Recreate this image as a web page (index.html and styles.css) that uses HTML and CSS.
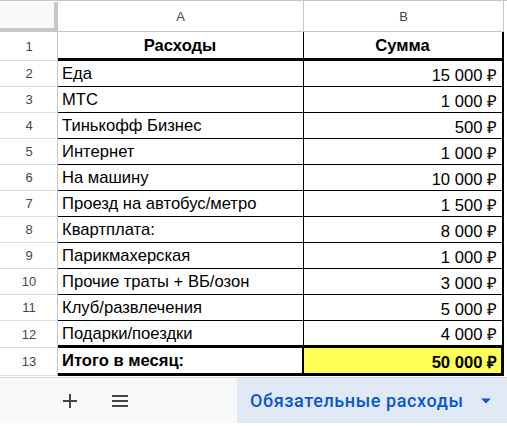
FILE: index.html
```html
<!DOCTYPE html>
<html lang="ru">
<head>
<meta charset="utf-8">
<link rel="stylesheet" href="styles.css">
</head>
<body>
<div class="sheet">
  <div class="corner"></div>
  <div class="colhead">A</div>
  <div class="colhead last">B</div>

  <div class="rowhead">1</div>
  <div class="cell r1 bold center">Расходы</div>
  <div class="cell r1 bold center right-edge">Сумма</div>

  <div class="rowhead">2</div><div class="cell">Еда</div><div class="cell num right-edge">15 000 ₽</div>
  <div class="rowhead">3</div><div class="cell">МТС</div><div class="cell num right-edge">1 000 ₽</div>
  <div class="rowhead">4</div><div class="cell">Тинькофф Бизнес</div><div class="cell num right-edge">500 ₽</div>
  <div class="rowhead">5</div><div class="cell">Интернет</div><div class="cell num right-edge">1 000 ₽</div>
  <div class="rowhead">6</div><div class="cell">На машину</div><div class="cell num right-edge">10 000 ₽</div>
  <div class="rowhead">7</div><div class="cell">Проезд на автобус/метро</div><div class="cell num right-edge">1 500 ₽</div>
  <div class="rowhead">8</div><div class="cell">Квартплата:</div><div class="cell num right-edge">8 000 ₽</div>
  <div class="rowhead">9</div><div class="cell">Парикмахерская</div><div class="cell num right-edge">1 000 ₽</div>
  <div class="rowhead">10</div><div class="cell">Прочие траты + ВБ/озон</div><div class="cell num right-edge">3 000 ₽</div>
  <div class="rowhead">11</div><div class="cell">Клуб/развлечения</div><div class="cell num right-edge">5 000 ₽</div>
  <div class="rowhead">12</div><div class="cell r12">Подарки/поездки</div><div class="cell num r12 right-edge">4 000 ₽</div>

  <div class="rowhead">13</div>
  <div class="cell r13 bold total-a">Итого в месяц:</div>
  <div class="cell r13 bold num total-b">50 000 ₽</div>
</div>

<div class="bottombar">
  <div class="tools">
    <svg class="ico" width="20" height="20" viewBox="0 0 20 20"><path d="M10 3v14M3 10h14" stroke="#444746" stroke-width="2" fill="none"/></svg>
    <svg class="ico" width="20" height="20" viewBox="0 0 20 20"><path d="M2 5h16M2 10h16M2 15h16" stroke="#444746" stroke-width="2" fill="none"/></svg>
  </div>
  <div class="tab">
    <span class="tabname">Обязательные расходы</span>
    <svg width="12" height="8" viewBox="0 0 12 8"><path d="M1 1.5h10L6 6.5z" fill="#0b57d0"/></svg>
  </div>
</div>
</body>
</html>
```

FILE: styles.css
```css
html, body {
  margin: 0;
  padding: 0;
  background: #ffffff;
}
body {
  width: 507px;
  height: 426px;
  overflow: hidden;
  font-family: "Liberation Sans", Arial, sans-serif;
  color: #000;
}
.sheet {
  display: grid;
  grid-template-columns: 58px 246px 200px;
  grid-template-rows: 31px 29px repeat(10, 26px) 27px 28px;
  border-top: 1px solid #c7c7c7;
  box-sizing: border-box;
  width: 507px;
}
.corner {
  background: #f8f9fa;
  border-right: 4px solid #c7c7c7;
  border-bottom: 4px solid #c7c7c7;
  box-sizing: border-box;
  margin-top: 1px;
}
.colhead {
  font-size: 13px;
  color: #444746;
  display: flex;
  align-items: center;
  justify-content: center;
  border-right: 1px solid #c7c7c7;
  border-bottom: 1px solid #c7c7c7;
  box-sizing: border-box;
  padding-top: 1px;
}
.rowhead {
  font-size: 13px;
  color: #444746;
  display: flex;
  align-items: center;
  justify-content: center;
  border-right: 1px solid #c7c7c7;
  border-bottom: 1px solid #dadce0;
  box-sizing: border-box;
  padding-left: 1px;
}
.cell {
  font-size: 16.6px;
  display: flex;
  align-items: center;
  padding: 1px 5px 0 4px;
  border-right: 1px solid #000;
  border-bottom: 1px solid #000;
  box-sizing: border-box;
  white-space: nowrap;
  overflow: hidden;
}
.cell.right-edge { border-right: 2px solid #000; }
.cell.r1 { border-bottom: 3px solid #000; }
.cell.r12 { border-bottom: 3px solid #000; }
.cell.r13 { border-bottom: 3px solid #000; }
.bold { font-weight: bold; }
.center { justify-content: center; }
.num { justify-content: flex-end; }
.total-a { border-right: 2px solid #000; }
.total-b {
  background: #ffff57;
  border-right: 3px solid #000;
  padding-right: 4px;
}
.bottombar {
  display: flex;
  height: 45px;
  margin-top: 1px;
  border-top: 1px solid #d5d5d5;
  background: #f8f9fa;
}
.tools {
  width: 237px;
  display: flex;
  align-items: center;
  padding-left: 60px;
  gap: 30px;
  box-sizing: border-box;
}
.ico { display: block; }
.tab {
  flex: 1;
  background: #e1e9f7;
  display: flex;
  align-items: center;
  padding-left: 13px;
  gap: 16px;
}
.tabname {
  font-family: "Roboto", "Liberation Sans", sans-serif;
  font-weight: 500;
  font-size: 18px;
  color: #0b57d0;
  letter-spacing: 0.6px;
}
```
